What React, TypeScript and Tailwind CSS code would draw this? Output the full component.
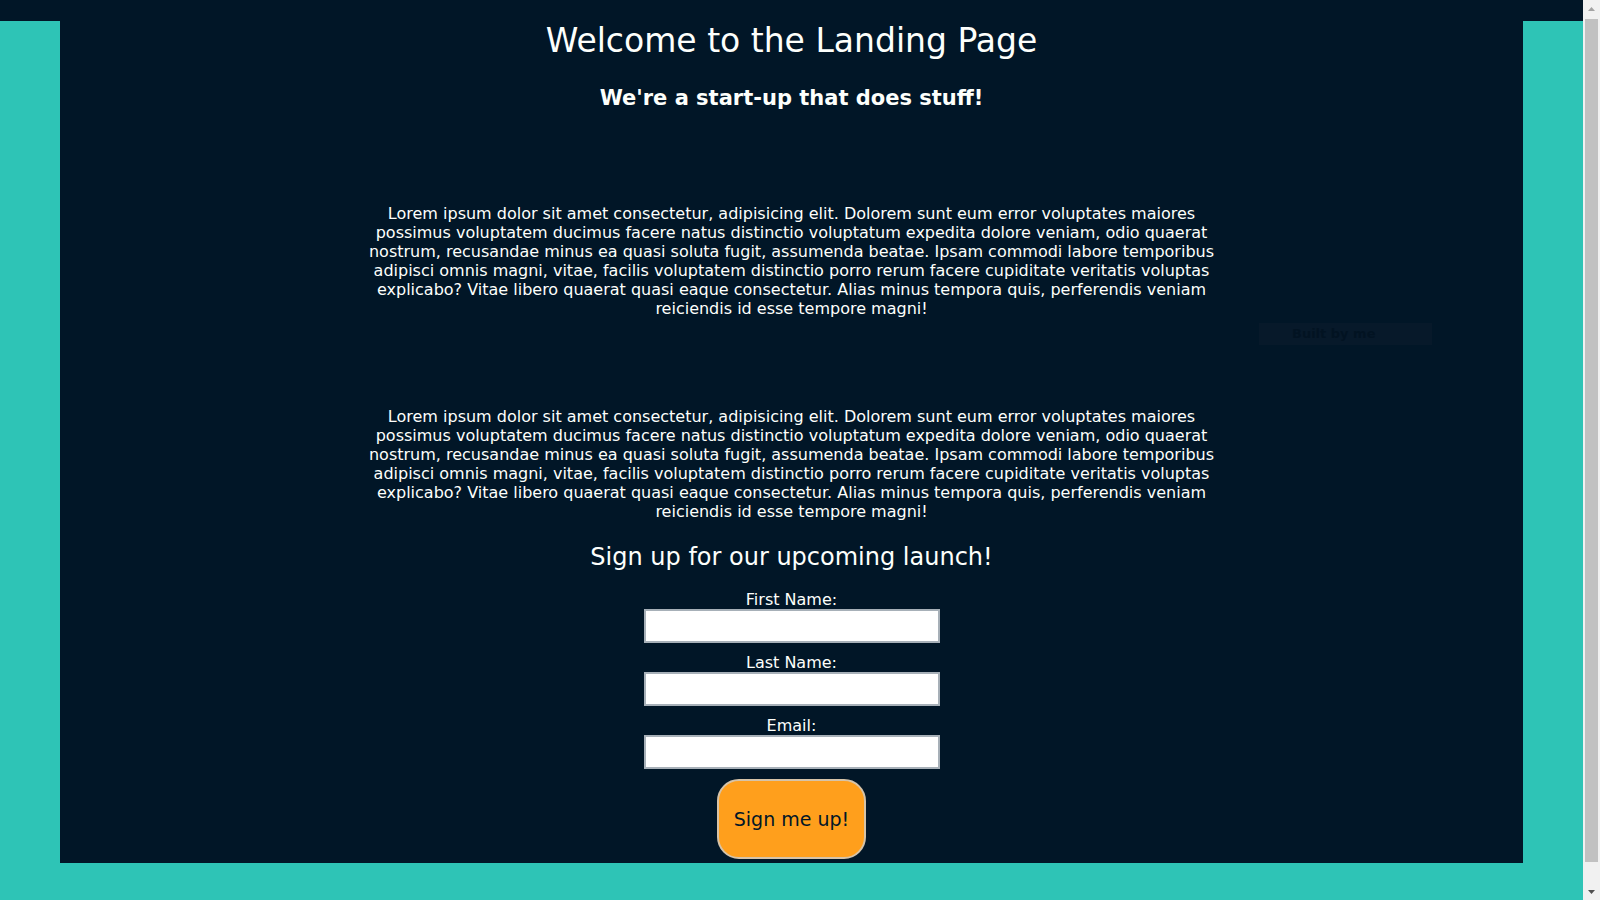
const lorem =
  "Lorem ipsum dolor sit amet consectetur, adipisicing elit. Dolorem sunt eum error voluptates maiores possimus voluptatem ducimus facere natus distinctio voluptatum expedita dolore veniam, odio quaerat nostrum, recusandae minus ea quasi soluta fugit, assumenda beatae. Ipsam commodi labore temporibus adipisci omnis magni, vitae, facilis voluptatem distinctio porro rerum facere cupiditate veritatis voluptas explicabo? Vitae libero quaerat quasi eaque consectetur. Alias minus tempora quis, perferendis veniam reiciendis id esse tempore magni!";

const fields = [
  { id: "first", label: "First Name:", type: "text" },
  { id: "last", label: "Last Name:", type: "text" },
  { id: "email", label: "Email:", type: "email" },
];

function ScrollTrack() {
  return (
    <div className="w-[17px] h-screen flex flex-col bg-[#f1f1f1]">
      <div className="h-[17px] flex items-center justify-center">
        <svg width="7" height="4" viewBox="0 0 7 4">
          <path d="M0 4 L3.5 0 L7 4 Z" fill="#a3a3a3" />
        </svg>
      </div>
      <div className="flex-1 px-[2px] pb-[21px] pt-[2px]">
        <div className="h-full bg-[#c1c1c1]" />
      </div>
      <div className="h-[17px] flex items-center justify-center">
        <svg width="7" height="4" viewBox="0 0 7 4">
          <path d="M0 0 L3.5 4 L7 0 Z" fill="#505050" />
        </svg>
      </div>
    </div>
  );
}

export default function App() {
  return (
    <div className="h-screen flex bg-[#2ec4b6]">
      <div className="flex-1 h-screen overflow-y-auto">
        <div className="min-h-[925px] bg-[linear-gradient(to_bottom,#011627_21px,#2ec4b6_21px)] font-['DejaVu_Sans',sans-serif] text-[#fdfffc]">
          <div className="relative mx-[60px] bg-[#011627] pt-[21px] pb-[4px]">
            {/* Header */}
            <header className="text-center">
              <h1 className="text-[33px] leading-[40px]">Welcome to the Landing Page</h1>
              <h2 className="mt-[23px] text-[21px] leading-[28px] font-bold">We're a start-up that does stuff!</h2>
            </header>

            {/* About sections */}
            <section className="mt-[92px] w-[852px] mx-auto text-center">
              <p className="text-[16px] leading-[19px]">{lorem}</p>
            </section>
            <section className="mt-[89px] w-[852px] mx-auto text-center">
              <p className="text-[16px] leading-[19px]">{lorem}</p>
            </section>

            {/* Signup */}
            <section className="mt-[21px] flex flex-col items-center">
              <h3 className="text-[24px] leading-[30px]">Sign up for our upcoming launch!</h3>
              <form className="mt-[18px] flex flex-col items-center" onSubmit={(e) => e.preventDefault()}>
                {fields.map((f) => (
                  <div key={f.id} className="flex flex-col items-center mb-[10px]">
                    <label htmlFor={f.id} className="text-[16px] leading-[19px]">
                      {f.label}
                    </label>
                    <input
                      id={f.id}
                      type={f.type}
                      className="w-[296px] h-[34px] bg-white border-2 border-[#a7b0b8] px-2 text-black outline-none"
                    />
                  </div>
                ))}
                <button
                  type="submit"
                  className="w-[149px] h-[80px] rounded-[22px] bg-[#ff9f1c] border-2 border-[#d6c3a8] text-[19px] text-[#011627]"
                >
                  Sign me up!
                </button>
              </form>
            </section>

            {/* faint floating badge */}
            <div className="absolute left-[1199px] top-[323px] w-[173px] h-[22px] bg-[#07192a] flex items-center pl-[33px] text-[13px] font-bold text-[#021322]">
              Built by me
            </div>
          </div>
        </div>
      </div>
      <ScrollTrack />
    </div>
  );
}
